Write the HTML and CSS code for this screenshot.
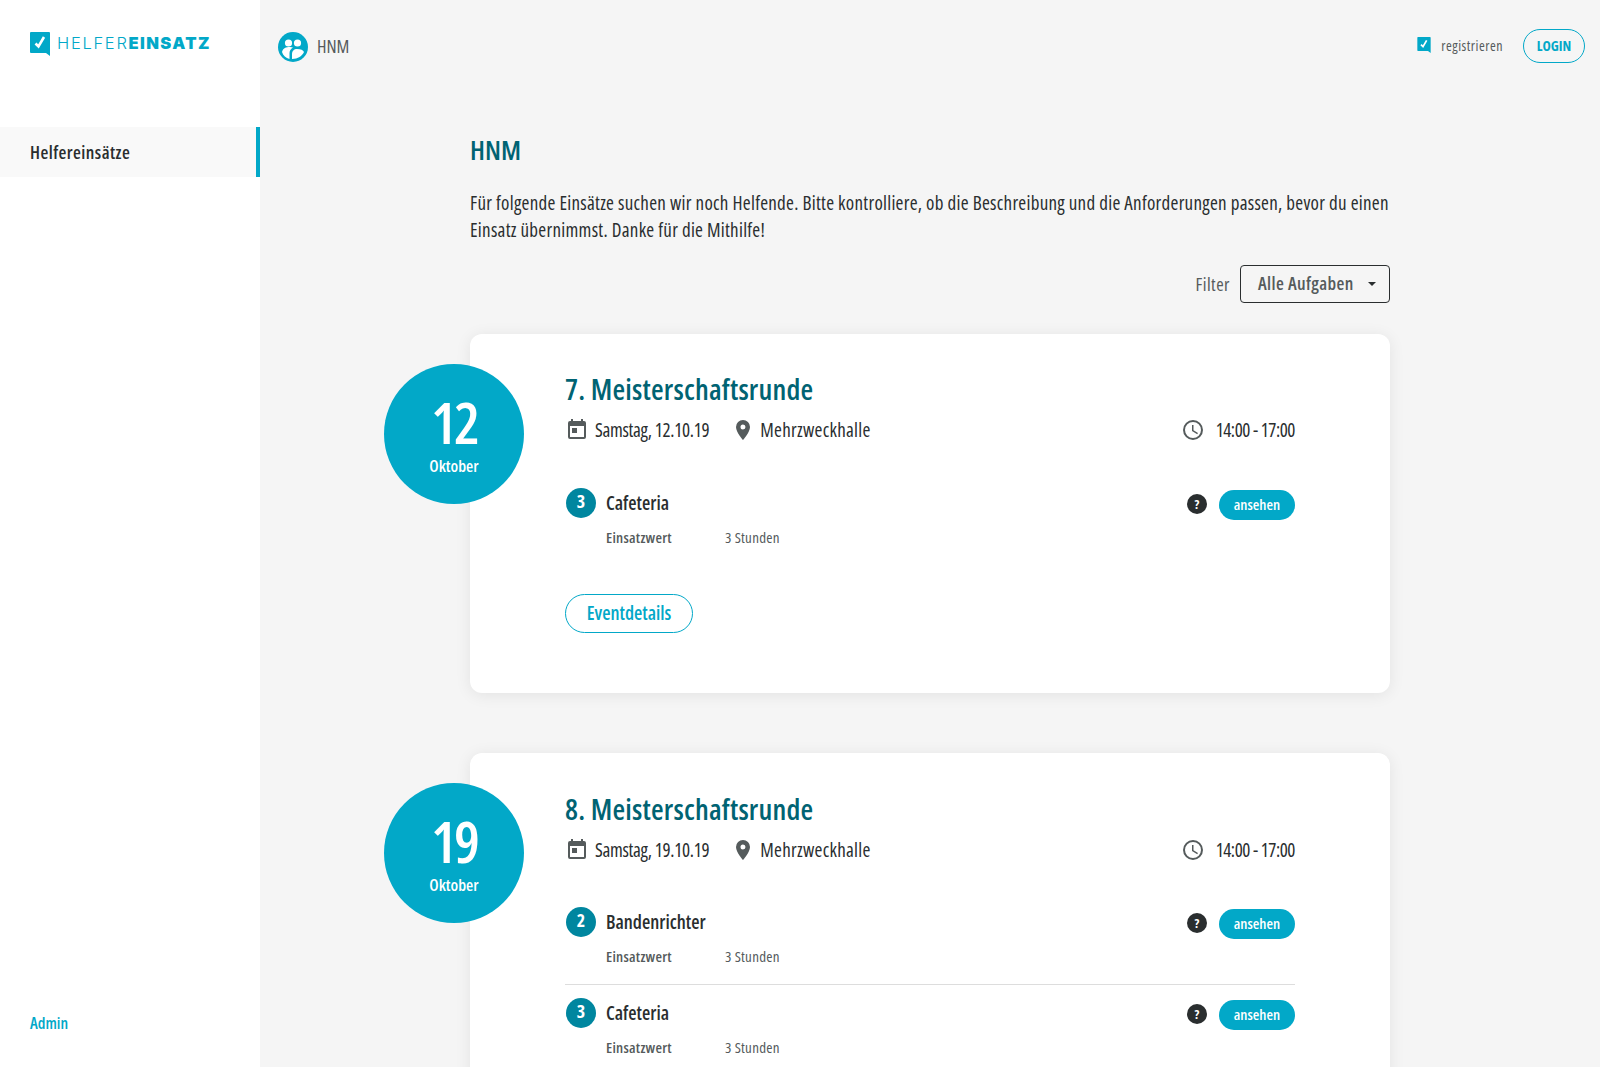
FILE: index.html
```html
<!DOCTYPE html>
<html lang="de">
<head>
<meta charset="utf-8">
<title>HNM</title>
<link rel="stylesheet" href="styles.css">
</head>
<body>
<div class="app">
  <aside class="sidebar">
    <div class="brand">
      <svg class="brand-mark" viewBox="0 0 20 24"><path d="M1 0h18a1 1 0 0 1 1 1v23l-4-3H1a1 1 0 0 1-1-1V1a1 1 0 0 1 1-1z" fill="#02a8c8"/><path d="M5.500 11.500l3 3L14 5" fill="none" stroke="#fff" stroke-width="2.600"/></svg>
      <span class="brand-name">HELFER<b>EINSATZ</b></span>
    </div>
    <nav class="side-nav"><a class="side-link">Helfereinsätze</a></nav>
    <a class="admin">Admin</a>
  </aside>
  <main class="main">
    <header class="topbar">
      <div class="org">
        <svg class="org-icon" viewBox="0 0 30 30"><circle cx="15" cy="15" r="15" fill="#02a8c8"/><circle cx="10.500" cy="11" r="3.600" fill="#fff"/><circle cx="19.500" cy="11" r="3.600" fill="#fff"/><path d="M4 20c1-4 4-5 8-5 1 0 2 .2 3 .6-2 1-3.500 3-3.500 5.400V27C8 26 5 23.500 4 20z" fill="#fff"/><path d="M14 27v-5c0-3 2-5 5-5 4 0 6 1 7 3-2 4-6 7-12 7z" fill="#fff"/></svg>
        <span class="org-name">HNM</span>
      </div>
      <div class="top-actions">
        <a class="register"><svg class="register-icon" viewBox="0 0 20 24"><path d="M1 0h18a1 1 0 0 1 1 1v23l-4-3H1a1 1 0 0 1-1-1V1a1 1 0 0 1 1-1z" fill="#02a8c8"/><path d="M5.500 11.500l3 3L14 5" fill="none" stroke="#fff" stroke-width="2.600"/></svg>registrieren</a>
        <a class="login">LOGIN</a>
      </div>
    </header>
    <section class="content">
      <h1 class="page-title">HNM</h1>
      <p class="intro">Für folgende Einsätze suchen wir noch Helfende. Bitte kontrolliere, ob die Beschreibung und die Anforderungen passen, bevor du einen Einsatz übernimmst. Danke für die Mithilfe!</p>
      <div class="filter"><span class="filter-label">Filter</span><button class="select"><span class="select-text">Alle Aufgaben</span><i class="caret"></i></button></div>

      <article class="card">
        <div class="date-badge"><span class="day">12</span><span class="month">Oktober</span></div>
        <h2 class="event-title">7. Meisterschaftsrunde</h2>
        <div class="meta">
          <span class="meta-item"><svg class="icon" viewBox="0 0 24 24"><path fill="#555b5c" d="M19 3h-1V1h-2v2H8V1H6v2H5a2 2 0 0 0-2 2v14a2 2 0 0 0 2 2h14a2 2 0 0 0 2-2V5a2 2 0 0 0-2-2zm0 16H5V8h14v11zM7 10h5v5H7z"/></svg>Samstag, 12.10.19</span>
          <span class="meta-item place"><svg class="icon" viewBox="0 0 24 24"><path fill="#555b5c" d="M12 2a7 7 0 0 0-7 7c0 5.250 7 13 7 13s7-7.750 7-13a7 7 0 0 0-7-7zm0 9.500A2.500 2.500 0 1 1 12 6.500a2.500 2.500 0 0 1 0 5z"/></svg>Mehrzweckhalle</span>
          <span class="meta-item time"><svg class="icon" viewBox="0 0 24 24"><path fill="#555b5c" d="M12 2a10 10 0 1 0 0 20 10 10 0 0 0 0-20zm0 18a8 8 0 1 1 0-16 8 8 0 0 1 0 16zm.5-13H11v6l5.200 3.200.8-1.300-4.500-2.700z"/></svg>14:00 - 17:00</span>
        </div>
        <div class="tasks">
          <div class="task">
            <div class="task-head"><span class="count">3</span><span class="task-name">Cafeteria</span><span class="help">?</span><a class="view">ansehen</a></div>
            <div class="task-detail"><b>Einsatzwert</b><span>3 Stunden</span></div>
          </div>
        </div>
        <a class="details">Eventdetails</a>
      </article>

      <article class="card">
        <div class="date-badge"><span class="day">19</span><span class="month">Oktober</span></div>
        <h2 class="event-title">8. Meisterschaftsrunde</h2>
        <div class="meta">
          <span class="meta-item"><svg class="icon" viewBox="0 0 24 24"><path fill="#555b5c" d="M19 3h-1V1h-2v2H8V1H6v2H5a2 2 0 0 0-2 2v14a2 2 0 0 0 2 2h14a2 2 0 0 0 2-2V5a2 2 0 0 0-2-2zm0 16H5V8h14v11zM7 10h5v5H7z"/></svg>Samstag, 19.10.19</span>
          <span class="meta-item place"><svg class="icon" viewBox="0 0 24 24"><path fill="#555b5c" d="M12 2a7 7 0 0 0-7 7c0 5.250 7 13 7 13s7-7.750 7-13a7 7 0 0 0-7-7zm0 9.500A2.500 2.500 0 1 1 12 6.500a2.500 2.500 0 0 1 0 5z"/></svg>Mehrzweckhalle</span>
          <span class="meta-item time"><svg class="icon" viewBox="0 0 24 24"><path fill="#555b5c" d="M12 2a10 10 0 1 0 0 20 10 10 0 0 0 0-20zm0 18a8 8 0 1 1 0-16 8 8 0 0 1 0 16zm.5-13H11v6l5.200 3.200.8-1.300-4.500-2.700z"/></svg>14:00 - 17:00</span>
        </div>
        <div class="tasks">
          <div class="task">
            <div class="task-head"><span class="count">2</span><span class="task-name">Bandenrichter</span><span class="help">?</span><a class="view">ansehen</a></div>
            <div class="task-detail"><b>Einsatzwert</b><span>3 Stunden</span></div>
          </div>
          <div class="task">
            <div class="task-head"><span class="count">3</span><span class="task-name">Cafeteria</span><span class="help">?</span><a class="view">ansehen</a></div>
            <div class="task-detail"><b>Einsatzwert</b><span>3 Stunden</span></div>
          </div>
        </div>
      </article>
    </section>
  </main>
</div>
</body>
</html>
```
FILE: styles.css
```css
* { box-sizing: border-box; }
html, body { margin: 0; height: 1067px; overflow: hidden; }
body { font-family: "Open Sans", "Roboto", sans-serif; font-stretch: 75%; color: #2a2e2f; background: #f5f5f5; }
.app { display: flex; height: 1067px; overflow: hidden; }
.sidebar { width: 260px; flex: none; background: #fff; display: flex; flex-direction: column; }
.brand { display: flex; align-items: flex-start; gap: 7px; padding: 32px 0 0 30px; height: 127px; }
.brand-mark { width: 20px; height: 24px; }
.brand-name { font-family: "Inter", sans-serif; font-stretch: normal; font-size: 16.500px; line-height: 22px; color: #02a8c8; letter-spacing: 1.700px; font-weight: 300; }
.brand-name b { font-weight: 900; letter-spacing: 1.400px; }
.side-link { display: block; height: 50px; line-height: 50px; padding-left: 30px; background: #f9f9f9; border-right: 4px solid #02a8c8; font-size: 18px; font-weight: 600; letter-spacing: .44px; }
.admin { margin-top: auto; padding: 0 0 33px 30px; font-size: 16px; line-height: 22px; font-weight: 600; color: #02a8c8; }
.main { flex: 1; min-width: 0; }
.topbar { height: 94px; display: flex; justify-content: space-between; padding: 32px 15px 0 18px; }
.org { display: flex; align-items: flex-start; gap: 9px; }
.org-icon { width: 30px; height: 30px; }
.org-name { font-size: 18px; line-height: 28px; color: #555b5c; }
.top-actions { display: flex; align-items: flex-start; gap: 20px; margin-top: -3px; }
.register { display: flex; align-items: center; gap: 10px; height: 32px; font-size: 14px; letter-spacing: .5px; color: #555b5c; }
.register-icon { width: 14px; height: 16px; }
.login { width: 62px; height: 34px; line-height: 32px; text-align: center; border: 1px solid #02a8c8; border-radius: 17px; color: #02a8c8; font-size: 14px; font-weight: 700; }
.content { width: 920px; margin-left: 210px; }
.page-title { margin: 39px 0 0; font-size: 27px; line-height: 34px; font-weight: 600; color: #006373; }
.intro { margin: 23px -4px 0 0; font-size: 19px; line-height: 27px; letter-spacing: .28px; }
.filter { display: flex; justify-content: flex-end; align-items: center; gap: 10px; margin-top: 21px; }
.filter-label { font-size: 18px; line-height: 36px; letter-spacing: .5px; color: #555b5c; }
.select { display: flex; align-items: center; justify-content: space-between; width: 150px; height: 38px; padding: 0 13px 2px 17px; background: transparent; border: 1px solid #2a2e2f; border-radius: 4px; font-family: inherit; font-stretch: inherit; font-size: 18px; font-weight: 600; letter-spacing: .4px; color: #555b5c; white-space: nowrap; }
.caret { width: 0; height: 0; margin-top: 2px; border: 4px solid transparent; border-top-color: #2a2e2f; border-bottom: 0; }
.card { position: relative; margin-top: 31px; margin-bottom: 60px; min-height: 359px; padding: 37px 95px 0 95px; background: #fff; border-radius: 12px; box-shadow: 0 2px 16px rgba(0,0,0,.08); }
.card + .card { padding-top: 38px; }
.date-badge { position: absolute; left: -86px; top: 30px; width: 140px; height: 140px; border-radius: 50%; background: #02a8c8; color: #fff; display: flex; flex-direction: column; align-items: center; }
.day { margin-top: 28px; font-size: 58px; line-height: 60px; font-weight: 600; letter-spacing: -3px; }
.month { margin-top: 3px; font-size: 16.500px; line-height: 22px; font-weight: 600; }
.event-title { margin: 0; font-size: 29px; line-height: 36px; font-weight: 600; letter-spacing: .2px; color: #006373; }
.meta { display: flex; align-items: center; gap: 22px; margin-top: 8px; height: 30px; font-size: 19px; letter-spacing: -.3px; }
.meta-item { display: flex; align-items: center; gap: 6px; }
.place { gap: 5px; letter-spacing: .28px; }
.icon { width: 24px; height: 24px; }
.time { margin-left: auto; gap: 11px; letter-spacing: -.46px; }
.tasks { margin-top: 43px; }
.card + .card .tasks { margin-top: 42px; }
.task { padding-bottom: 17px; margin-bottom: 13px; border-bottom: 1px solid #ddd; }
.task:last-child { border-bottom: 0; }
.task-head { display: flex; align-items: center; height: 30px; }
.count { width: 30px; height: 30px; margin-left: 1px; border-radius: 50%; background: #00869f; color: #fff; text-align: center; font-size: 18px; line-height: 27px; font-weight: 700; }
.task-name { margin-left: 10px; font-size: 19px; font-weight: 600; }
.help { margin-left: auto; margin-top: 1px; width: 20px; height: 20px; border-radius: 50%; background: #2a2e2f; color: #fff; text-align: center; font-size: 13px; line-height: 20px; font-weight: 700; }
.view { margin-left: 12px; margin-top: 4px; width: 76px; height: 30px; border-radius: 15px; background: #02a8c8; color: #fff; text-align: center; line-height: 28px; font-size: 15px; font-weight: 600; }
.task-detail { display: flex; margin: 9px 0 0 41px; padding-bottom: 1px; font-size: 15px; line-height: 20px; letter-spacing: .25px; color: #555b5c; }
.task-detail b { width: 119px; font-weight: 600; }
.details { display: block; width: 128px; height: 39px; margin-top: 29px; line-height: 37px; text-align: center; border: 1px solid #02a8c8; border-radius: 20px; color: #02a8c8; font-size: 19px; font-weight: 600; }
```
